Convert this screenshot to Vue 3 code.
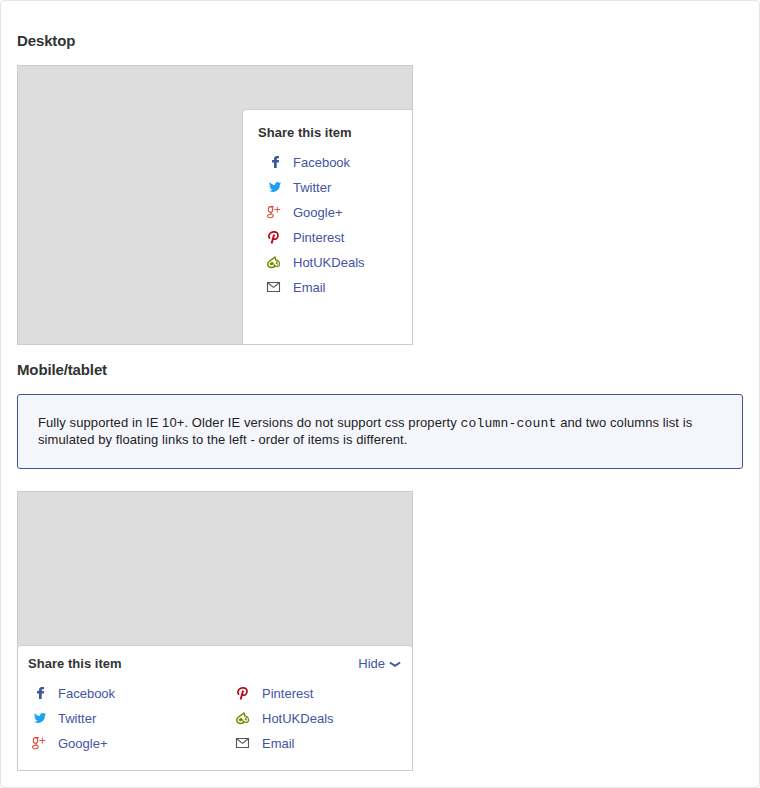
<script setup>
const networks = [
  { name: 'Facebook', icon: 'facebook' },
  { name: 'Twitter', icon: 'twitter' },
  { name: 'Google+', icon: 'google' },
  { name: 'Pinterest', icon: 'pinterest' },
  { name: 'HotUKDeals', icon: 'hukd' },
  { name: 'Email', icon: 'email' },
]
const layouts = ['desktop', 'mobile']
</script>

<template>
  <main class="page">
    <template v-for="layout in layouts" :key="layout">
      <h2 class="title">{{ layout === 'desktop' ? 'Desktop' : 'Mobile/tablet' }}</h2>
      <p v-if="layout === 'mobile'" class="note">
        Fully supported in IE 10+. Older IE versions do not support css property
        <code>column-count</code> and two columns list is simulated by floating links to the left - order of items is different.
      </p>
      <div class="frame" :class="layout">
        <section class="panel">
          <header class="panel-head">
            <h3>Share this item</h3>
            <a v-if="layout === 'mobile'" class="hide">
              Hide
              <svg class="chevron" viewBox="0 0 12 8"><path d="M.9 1.500 6 4.900l5.100-3.400" fill="none" stroke="#4453a4" stroke-width="1.900" /></svg>
            </a>
          </header>
          <ul class="links">
            <li v-for="n in networks" :key="n.name">
              <svg class="icon" viewBox="0 0 16 16">
                <path v-if="n.icon === 'facebook'" fill="#3b5998" d="M8 14V8.500H6V6.100h2V4.700C8 2.900 9.100 2 10.900 2H13v2.300h-1.300c-.7 0-1 .3-1 .9v.9H13l-.2 2.400h-2.100V14z" />
                <path v-else-if="n.icon === 'twitter'" fill="#1da1f2" d="M15.300 4.100c-.4.200-.9.400-1.400.4.500-.3.900-.8 1.100-1.400-.5.300-1 .5-1.600.6a2.600 2.600 0 0 0-4.400 2.300c-2.100-.1-4-1.100-5.200-2.700-.7 1.200-.3 2.700.8 3.400-.4 0-.8-.1-1.200-.3 0 1.300.9 2.300 2 2.500-.4.100-.8.100-1.100 0 .3 1 1.200 1.700 2.400 1.800-1.100.8-2.300 1.200-3.700 1.100 1.100.7 2.500 1.100 3.900 1.100 4.600 0 7.200-3.900 7-7.500.5-.3.900-.8 1.300-1.300z" />
                <g v-else-if="n.icon === 'google'" fill="none" stroke="#dd4b39">
                  <ellipse cx="4.500" cy="5.400" rx="2.200" ry="2.800" stroke-width="1.100" />
                  <path d="M4.700 2.600H7.800M5.300 8.200c-1.300 1.100.2 1.500 1.100 2.200 1.600 1.200.8 3.300-2 3.300-3.300 0-3.700-2.100-1.900-3 .9-.5 1.900-.5 2.700-.5" stroke-width="1.100" />
                  <path d="M11.300 2.600v6M8.300 5.500h6" stroke-width=".9" />
                </g>
                <g v-else-if="n.icon === 'pinterest'" fill="none" stroke="#bd081c">
                  <path stroke-width="1.700" d="M4.100 9.600C2.600 8.600 2.500 6.300 3.800 4.700 5.400 2.700 9.100 2.200 10.900 3.700c1.900 1.600 1.300 5.100-.8 6.200-1.400.7-2.700.2-2.900-.9" />
                  <path stroke-width="1.900" d="M8.100 5.600 5.600 14.600" />
                </g>
                <g v-else-if="n.icon === 'hukd'" fill="none" stroke="#758c00">
                  <path stroke-width="1.500" d="M9.300 2.600C8 4.900 1.700 6.400 1.700 10.100c0 2.300 1.900 3.400 4 3.400 1.700 0 3.100-.7 3.900-2M9.300 2.600c-.3 1.900.9 2.700.6 4.300" />
                  <path fill="#758c00" stroke-width=".6" d="M6.300 8c-1.300.4-2.300 1-2.300 2 0 .8.600 1.200 1.400 1.100 1.400-.2 2-1.200 2.200-2.300" />
                  <path stroke-width="1.200" d="M7.700 9.700c.2 1.700 1.500 2.700 3.200 2.700 1.600 0 2.700-1 2.700-2.500 0-1.700-.9-2.900-2.200-3.600.3 1.400-.4 2.200-1.100 2.900l1.700 1.100" />
                </g>
                <g v-else fill="none" stroke="#555" stroke-width="1.100">
                  <path d="M1.500 3.500h12v9h-12z" /><path d="m1.700 3.800 5.800 4.600 5.800-4.600" />
                </g>
              </svg>
              <a>{{ n.name }}</a>
            </li>
          </ul>
        </section>
      </div>
    </template>
  </main>
</template>

<style>
body { background: #fff; }
</style>

<style scoped>
* { box-sizing: border-box; }
.page {
  height: 788px;
  padding: 30px 16px 16px;
  border: 1px solid #e5e5e5;
  border-radius: 4px;
  font: 13px/17px "Liberation Sans", Arial, sans-serif;
  color: #222;
}
.title { margin: 0 0 14px; font-size: 15px; line-height: 20px; letter-spacing: -.13px; color: #333; }
.frame {
  display: flex;
  width: 396px;
  height: 280px;
  border: 1px solid #ccc;
  background: #ddd;
}
.frame.desktop { margin-bottom: 15px; justify-content: flex-end; padding-top: 43px; }
.frame.mobile { align-items: flex-end; }
.panel { background: #fff; border: 1px solid #ccc; }
.desktop .panel {
  width: 170px;
  padding: 14px 0 0 15px;
  border-width: 1px 0 0 1px;
  border-radius: 4px 0 0 0;
}
.mobile .panel {
  flex: 1;
  min-width: 0;
  height: 126px;
  margin: 0 -1px -1px;
  padding: 9px 11px 0 10px;
  border-radius: 4px 4px 0 0;
}
.panel-head { display: flex; justify-content: space-between; align-items: flex-start; height: 18px; }
h3 { margin: 0; font-size: 13px; line-height: 18px; letter-spacing: .03px; color: #333; }
.links { margin: 8px 0 0; padding: 0; list-style: none; }
.links li { display: flex; align-items: center; height: 25px; color: #4453a4; }
.desktop .links { padding-left: 8px; }
.mobile .links { columns: 2; column-gap: 0; width: 408px; margin-left: 3px; }
.icon { width: 16px; height: 16px; margin: 0 11px 1px 0; flex: none; }
.mobile .links li { break-inside: avoid; }
.hide { display: flex; align-items: center; gap: 4px; color: #4453a4; }
.chevron { width: 12px; height: 8px; margin-top: 2px; }
.note {
  height: 75px;
  margin: 0 0 22px;
  padding: 19px 20px;
  border: 1px solid #4453a4;
  border-radius: 3px;
  background: #f5f6fc;
  letter-spacing: .09px;
}
code { font: 13px/1 "Liberation Mono", monospace; letter-spacing: .2px; }
</style>
